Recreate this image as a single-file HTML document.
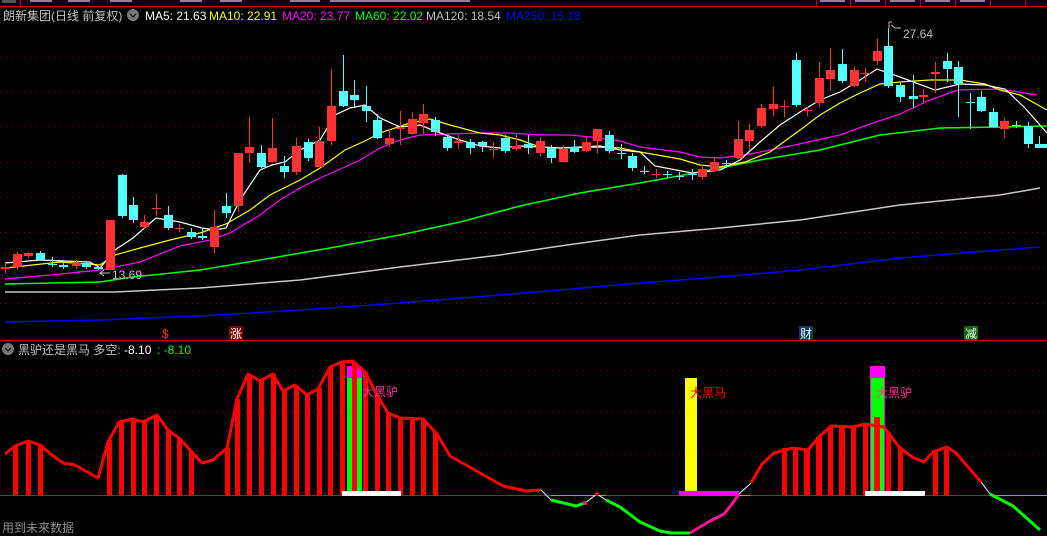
<!DOCTYPE html>
<html><head><meta charset="utf-8"><style>
html,body{margin:0;padding:0;background:#000;width:1047px;height:536px;overflow:hidden}
svg{display:block}
text{font-family:"Liberation Sans","Noto Sans CJK SC",sans-serif;font-size:12px}
</style></head><body>
<svg width="1047" height="536" viewBox="0 0 1047 536" xmlns="http://www.w3.org/2000/svg">
<rect width="1047" height="536" fill="#000"/>
<!-- top menu remnants -->
<line x1="0" y1="6.5" x2="1047" y2="6.5" stroke="#c00000" stroke-width="1"/>
<line x1="20.5" y1="0" x2="20.5" y2="6" stroke="#c00000"/>
<rect x="2" y="0" width="14" height="3" fill="#555"/>
<g stroke="#c00000"><line x1="816.5" y1="0" x2="816.5" y2="6"/><line x1="850.5" y1="0" x2="850.5" y2="6"/><line x1="885.5" y1="0" x2="885.5" y2="6"/><line x1="920.5" y1="0" x2="920.5" y2="6"/><line x1="955.5" y1="0" x2="955.5" y2="6"/><line x1="990.5" y1="0" x2="990.5" y2="6"/><line x1="1025.5" y1="0" x2="1025.5" y2="6"/></g>
<g fill="#888"><rect x="30" y="0" width="22" height="2"/><rect x="68" y="0" width="22" height="2"/><rect x="110" y="0" width="22" height="2"/><rect x="180" y="0" width="22" height="2"/><rect x="220" y="0" width="22" height="2"/><rect x="290" y="0" width="30" height="2"/><rect x="330" y="0" width="140" height="2"/><rect x="820" y="0" width="25" height="2"/><rect x="855" y="0" width="25" height="2"/><rect x="890" y="0" width="25" height="2"/><rect x="925" y="0" width="25" height="2"/><rect x="960" y="0" width="25" height="2"/></g>

<!-- header -->
<text x="3" y="20" fill="#c0c0c0">朗新集团(日线 前复权)</text>
<circle cx="133" cy="15" r="6" fill="#777"/><path d="M130 14l3 3 3-3" stroke="#222" stroke-width="1.5" fill="none"/>
<text x="145" y="20" fill="#fff">MA5: 21.63</text>
<text x="209" y="20" fill="#ffff00">MA10: 22.91</text>
<text x="282" y="20" fill="#ff00ff">MA20: 23.77</text>
<text x="355" y="20" fill="#00ff00">MA60: 22.02</text>
<text x="426" y="20" fill="#c0c0c0">MA120: 18.54</text>
<text x="506" y="20" fill="#0000ff">MA250: 15.18</text>

<!-- grid top -->
<g stroke="#8b0000" stroke-dasharray="1,5" stroke-width="1">
<line x1="0" y1="57.5" x2="1047" y2="57.5"/><line x1="0" y1="91.5" x2="1047" y2="91.5"/><line x1="0" y1="126.5" x2="1047" y2="126.5"/><line x1="0" y1="162.5" x2="1047" y2="162.5"/><line x1="0" y1="197.5" x2="1047" y2="197.5"/><line x1="0" y1="232.5" x2="1047" y2="232.5"/><line x1="0" y1="267.5" x2="1047" y2="267.5"/><line x1="0" y1="303.5" x2="1047" y2="303.5"/>
<line x1="0" y1="370.5" x2="1047" y2="370.5"/><line x1="0" y1="412.5" x2="1047" y2="412.5"/><line x1="0" y1="454.5" x2="1047" y2="454.5"/>
</g>

<!-- MAs -->
<g fill="none" stroke-width="1.2">
<polyline stroke="#0000ff" stroke-width="1.5" points="5,322 100,320 200,316 300,310 400,303 500,295 560,290 640,283 720,277 800,270 900,258 1000,250 1040,247"/>
<polyline stroke="#c8c8c8" stroke-width="1.5" points="5,292 115,292 200,288 300,280 400,267 500,255 560,246 640,235 720,228 800,220 900,205 1000,195 1040,188"/>
<polyline stroke="#00ff00" stroke-width="1.5" points="5,284 100,282 133,277 200,270 260,260 330,248 400,235 460,222 520,206 580,193 640,183 700,172 760,160 820,150 880,135 940,128 1000,127 1047,126"/>
<polyline stroke="#ff00ff" points="5,279 50,275 100,270 140,262 180,246 210,240 230,233 260,215 280,200 300,188 320,178 345,167 360,160 380,148 400,140 420,135 450,134 480,133 510,133 540,135 570,135 600,138 620,141 640,147 680,152 700,157 720,158 750,154 790,146 840,135 870,124 900,114 930,100 958,90 1000,89 1037,95"/>
<polyline stroke="#ffff00" points="5,268 60,262 100,265 115,255 140,248 170,240 200,233 226,224 250,210 270,195 300,180 320,168 345,150 365,141 380,133 410,123 430,119 450,125 480,133 500,135 520,140 540,147 560,148 597,147 620,148 640,152 680,159 700,165 720,167 745,162 770,152 800,130 820,115 840,103 860,93 880,84 900,82 930,80 960,80 985,84 1000,90 1020,95 1047,110"/>
<polyline stroke="#fff" points="5,263 40,260 90,262 100,268 115,250 133,238 156,218 180,222 202,228 215,230 226,228 240,200 260,170 272,165 285,162 300,150 320,140 335,115 350,108 365,105 380,118 400,127 420,125 440,133 460,140 480,146 500,148 520,146 560,148 600,146 620,150 640,152 655,166 692,173 720,170 740,160 760,142 780,125 800,112 820,100 840,92 860,80 877,69 900,77 935,90 960,84 985,85 1005,89 1025,108 1047,133"/>
</g>

<!-- candles -->
<path stroke="#ff3333" stroke-width="1" fill="none" d="M5.5 263V273M17.5 252V270M28.5 252V258M76.5 260V269M110.5 220V270M144.5 215V229M156.5 194V216M179.5 224V232M214.5 210V253M238.5 153V212M249.5 117V163M272.5 118V163M296.5 138V175M319.5 127V167M331.5 69V145M389.5 129V147M400.5 111V145M412.5 112V135M423.5 104V134M458.5 135V149M493.5 142V158M516.5 133V151M540.5 137V156M563.5 146V162M586.5 137V152M597.5 129V153M656.5 169V178M702.5 165V180M714.5 157V172M738.5 121V159M749.5 124V150M761.5 104V128M773.5 87V116M784.5 100V117M807.5 107V116M819.5 62V107M830.5 48V91M854.5 67V87M865.5 68V82M877.5 39V65M923.5 89V103M935.5 62V93M1004.5 118V138"/>
<path fill="#ff3333" d="M1 267h9v2h-9zM13 254h9v13h-9zM24 253h9v3h-9zM72 263h9v3h-9zM106 220h9v50h-9zM140 222h9v5h-9zM152 208h9v1h-9zM175 228h9v1h-9zM210 227h9v20h-9zM234 153h9v53h-9zM245 147h9v6h-9zM268 148h9v14h-9zM292 146h9v26h-9zM315 141h9v26h-9zM327 106h9v35h-9zM385 138h9v6h-9zM396 128h9v1h-9zM408 119h9v15h-9zM419 114h9v9h-9zM454 141h9v2h-9zM489 149h9v1h-9zM512 146h9v3h-9zM536 141h9v12h-9zM559 149h9v13h-9zM582 142h9v9h-9zM593 129h9v12h-9zM652 174h9v1h-9zM698 169h9v8h-9zM710 162h9v9h-9zM734 139h9v19h-9zM745 130h9v11h-9zM757 108h9v18h-9zM769 104h9v5h-9zM780 106h9v1h-9zM803 110h9v1h-9zM815 78h9v25h-9zM826 70h9v9h-9zM850 70h9v16h-9zM861 73h9v1h-9zM873 51h9v10h-9zM919 95h9v2h-9zM931 72h9v2h-9zM1000 121h9v8h-9z"/>
<path stroke="#54ffff" stroke-width="1" fill="none" d="M40.5 251V261M52.5 257V267M63.5 260V269M86.5 261V269M98.5 266V270M122.5 174V218M133.5 197V223M168.5 206V230M191.5 228V239M202.5 229V240M226.5 193V218M261.5 145V168M284.5 156V178M308.5 139V161M343.5 55V107M354.5 80V108M366.5 86V122M377.5 114V139M435.5 117V136M447.5 135V151M470.5 139V154M482.5 141V152M505.5 135V153M528.5 135V154M551.5 145V163M574.5 140V153M609.5 131V153M621.5 144V159M632.5 153V171M644.5 166V174M667.5 171V178M679.5 172V180M692.5 169V180M726.5 160V168M796.5 53V107M842.5 49V83M888.5 28V88M900.5 82V102M913.5 75V108M947.5 53V82M958.5 61V117M970.5 93V129M981.5 91V112M993.5 108V128M1016.5 121V128M1028.5 122V148M1039.5 136V148"/>
<path fill="#54ffff" d="M36 253h9v7h-9zM48 264h9v1h-9zM59 265h9v2h-9zM82 263h9v4h-9zM94 267h9v2h-9zM118 175h9v41h-9zM129 205h9v15h-9zM164 215h9v13h-9zM187 232h9v5h-9zM198 236h9v2h-9zM222 206h9v7h-9zM257 153h9v14h-9zM280 166h9v6h-9zM304 142h9v16h-9zM339 91h9v15h-9zM350 95h9v5h-9zM362 106h9v5h-9zM373 120h9v18h-9zM431 120h9v12h-9zM443 137h9v11h-9zM466 142h9v6h-9zM478 142h9v4h-9zM501 138h9v13h-9zM524 144h9v4h-9zM547 148h9v10h-9zM570 147h9v5h-9zM605 135h9v16h-9zM617 153h9v1h-9zM628 156h9v12h-9zM640 171h9v1h-9zM663 174h9v1h-9zM675 176h9v1h-9zM688 174h9v1h-9zM722 163h9v1h-9zM792 60h9v45h-9zM838 64h9v17h-9zM884 46h9v40h-9zM896 85h9v12h-9zM909 96h9v3h-9zM943 61h9v8h-9zM954 67h9v17h-9zM966 102h9v1h-9zM977 97h9v14h-9zM989 112h9v15h-9zM1012 125h9v1h-9zM1024 126h9v18h-9zM1035 144h9v4h-9zM1043 144h4v4h-4z"/>

<!-- price labels -->
<path d="M104 270l-4 3 4 3M100 273h10" stroke="#c0c0c0" fill="none"/>
<text x="112" y="279" fill="#c0c0c0">13.69</text>
<path d="M889 28v-6h3M891 25l4 3h6" stroke="#c0c0c0" fill="none"/>
<text x="903" y="38" fill="#c0c0c0">27.64</text>

<!-- markers -->
<text x="162" y="338" fill="#ff3333" font-size="11">$</text>
<rect x="229" y="326" width="14" height="14" fill="#800000"/><text x="230" y="338" fill="#fff">涨</text>
<rect x="799" y="326" width="14" height="14" fill="#0a3a6a"/><text x="800" y="338" fill="#fff">财</text>
<rect x="964" y="326" width="14" height="14" fill="#0a6a0a"/><text x="965" y="338" fill="#fff">减</text>

<line x1="0" y1="340.5" x2="1047" y2="340.5" stroke="#c00000" stroke-width="1.5"/>

<!-- bottom header -->
<circle cx="8" cy="349" r="6" fill="#777"/><path d="M5 348l3 3 3-3" stroke="#222" stroke-width="1.5" fill="none"/>
<text x="18" y="354" fill="#c0c0c0">黑驴还是黑马 多空: <tspan fill="#fff">-8.10</tspan></text>
<text x="157" y="354" fill="#00ff00">: -8.10</text>

<!-- baseline -->
<line x1="0" y1="495.5" x2="1047" y2="495.5" stroke="#e00000"/>
<line x1="551" y1="495.5" x2="606" y2="495.5" stroke="#00ff00"/>
<line x1="990" y1="495.5" x2="1047" y2="495.5" stroke="#00ff00"/>
<line x1="739" y1="495.5" x2="750" y2="495.5" stroke="#00ff00"/>

<!-- bottom bars -->
<g fill="#ff0000">
<rect x="13" y="446" width="5" height="49"/><rect x="26" y="441" width="5" height="54"/><rect x="38" y="445" width="5" height="50"/>
<rect x="107" y="440" width="5" height="55"/><rect x="119" y="421" width="5" height="74"/><rect x="131" y="419" width="5" height="76"/><rect x="142" y="421" width="5" height="74"/><rect x="154" y="416" width="5" height="79"/><rect x="166" y="430" width="5" height="65"/><rect x="177" y="438" width="5" height="57"/><rect x="189" y="451" width="5" height="44"/>
<rect x="225" y="448" width="5" height="47"/><rect x="235" y="399" width="5" height="96"/><rect x="247" y="375" width="5" height="120"/><rect x="259" y="380" width="5" height="115"/><rect x="271" y="374" width="5" height="121"/><rect x="282" y="390" width="5" height="105"/><rect x="294" y="386" width="5" height="109"/><rect x="305" y="395" width="5" height="100"/><rect x="317" y="388" width="5" height="107"/><rect x="328" y="367" width="5" height="128"/><rect x="340" y="362" width="5" height="133"/><rect x="352" y="362" width="5" height="133"/><rect x="363" y="372" width="5" height="123"/><rect x="375" y="395" width="5" height="100"/><rect x="386" y="413" width="5" height="82"/><rect x="398" y="418" width="5" height="77"/><rect x="410" y="419" width="5" height="76"/><rect x="421" y="419" width="5" height="76"/><rect x="433" y="432" width="5" height="63"/>
<rect x="782" y="448" width="5" height="47"/><rect x="793" y="448" width="5" height="47"/><rect x="804" y="450" width="6" height="45"/><rect x="816" y="437" width="6" height="58"/><rect x="828" y="427" width="5" height="68"/><rect x="839" y="426" width="6" height="69"/><rect x="851" y="427" width="5" height="68"/><rect x="863" y="424" width="5" height="71"/><rect x="886" y="432" width="5" height="63"/><rect x="898" y="448" width="5" height="47"/><rect x="933" y="451" width="5" height="44"/><rect x="944" y="447" width="5" height="48"/>
</g>
<!-- special columns -->
<rect x="347" y="366" width="5" height="129" fill="#ff00ff"/><rect x="347" y="378" width="5" height="117" fill="#00ff00"/>
<rect x="357" y="366" width="5" height="129" fill="#ff00ff"/><rect x="357" y="378" width="5" height="117" fill="#00ff00"/>
<rect x="342" y="491" width="59" height="5" fill="#fff"/>
<rect x="685" y="378" width="12" height="117" fill="#ffff00"/>
<rect x="679" y="491" width="60" height="5" fill="#ff00ff"/>
<rect x="870" y="366" width="15" height="129" fill="#ff00ff"/>
<rect x="871" y="378" width="13" height="117" fill="#00ff00"/>
<rect x="874" y="417" width="6" height="78" fill="#ff0000"/>
<rect x="865" y="491" width="60" height="5" fill="#fff"/>

<!-- curve -->
<g fill="none" stroke-linejoin="round">
<polyline stroke="#ff0000" stroke-width="3" points="5,454 15,446 28,441 40,445 52,455 63,463 75,465 98,478 108,442 119,422 133,419 143,422 157,415 168,430 180,439 192,452 202,463 213,460 227,448 237,399 248,374 260,381 273,374 283,391 295,385 307,395 318,389 330,367 342,362 353,361 365,372 377,395 388,413 400,418 423,419 437,434 450,456 473,469 503,486 526,491 541,490"/>
<polyline stroke="#fff" stroke-width="1" points="541,490 551,500"/>
<polyline stroke="#00ff00" stroke-width="3" points="551,500 576,506 585,503"/>
<polyline stroke="#fff" stroke-width="1" points="585,503 597,494 606,500"/>
<circle cx="585" cy="503" r="2" fill="#ff1493"/><circle cx="597" cy="494" r="2" fill="#ff0000"/>
<polyline stroke="#00ff00" stroke-width="3" points="606,500 620,507 640,522 660,531 671,533 690,533"/>
<polyline stroke="#ff1493" stroke-width="3" points="690,533 710,521 724,514 732,504 739,494"/>
<polyline stroke="#fff" stroke-width="1" points="739,494 751,483"/>
<polyline stroke="#ff0000" stroke-width="3" points="751,483 762,464 774,453 793,448 808,450 819,437 831,426 853,427 865,424 884,427 899,447 912,457 924,462 933,452 947,447 956,453 981,482"/>
<polyline stroke="#fff" stroke-width="1" points="981,482 990,494"/>
<polyline stroke="#00ff00" stroke-width="3" points="990,494 1013,506 1040,530"/>
</g>

<text x="362" y="396" fill="#ff3399" font-size="13">大黑驴</text>
<text x="690" y="397" fill="#ff0000" font-size="13">大黑马</text>
<text x="876" y="397" fill="#ff3399" font-size="13">大黑驴</text>

<text x="2" y="532" fill="#909090">用到未来数据</text>
</svg>
</body></html>
